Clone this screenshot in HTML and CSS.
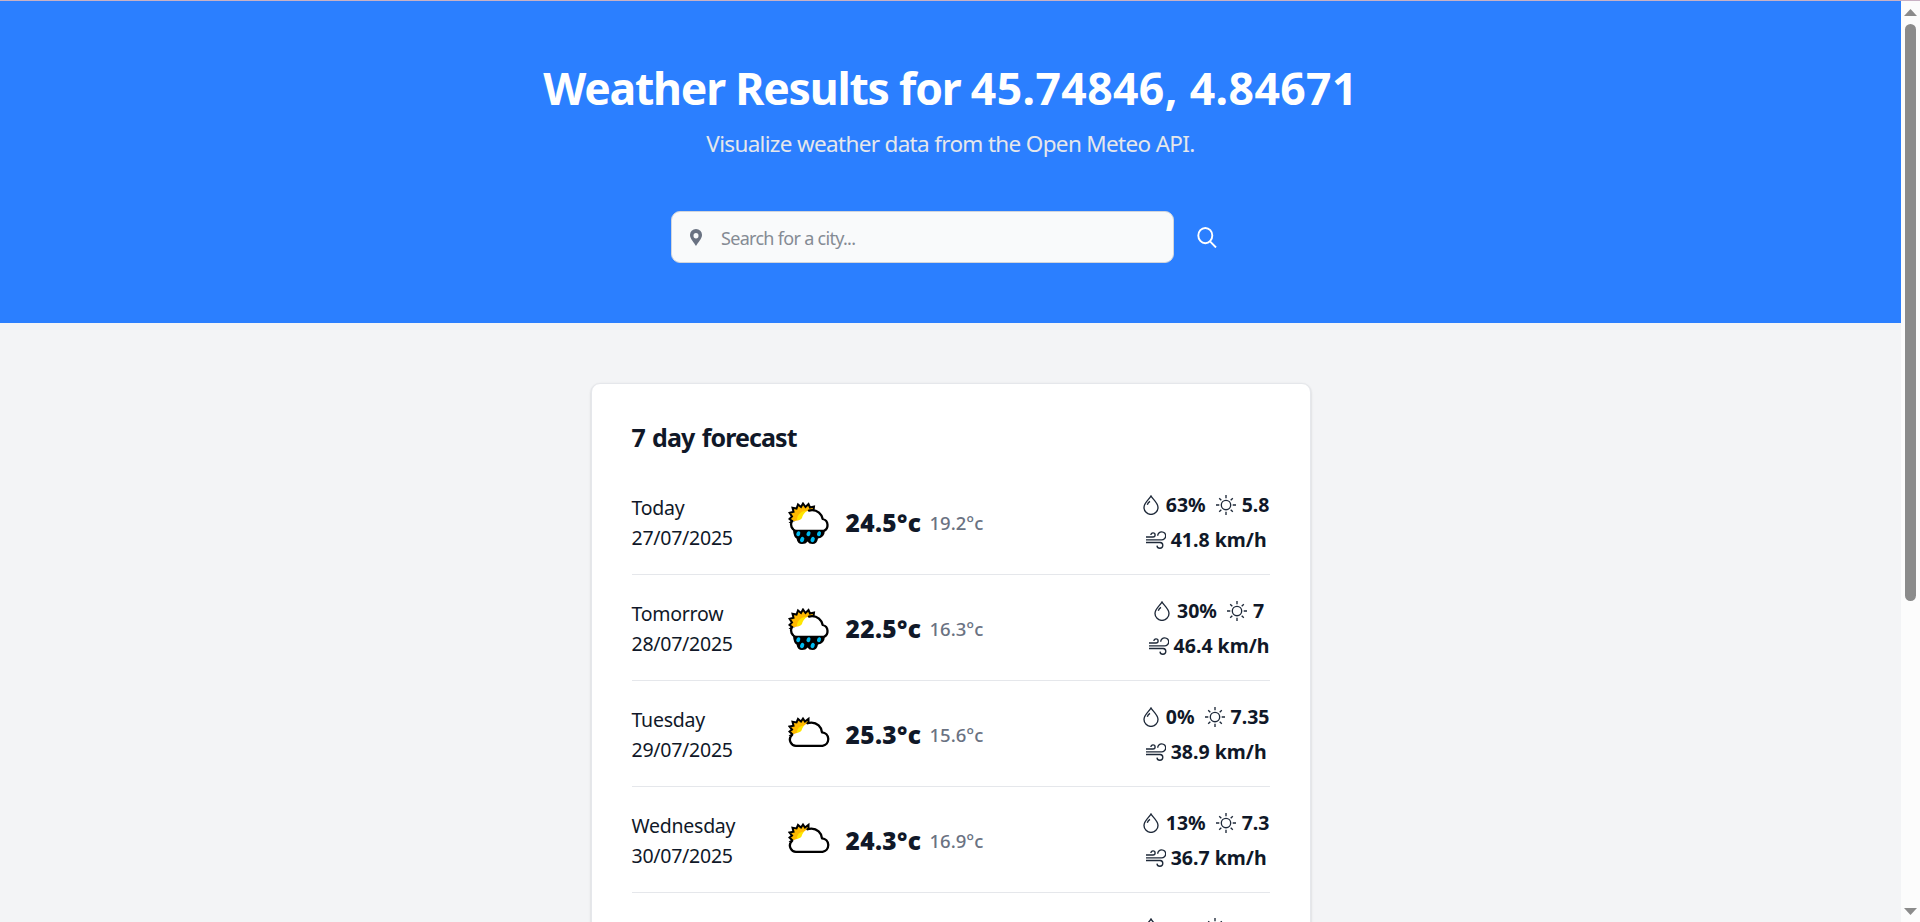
FILE: index.html
```
<!DOCTYPE html>
<html lang="en">
<head>
<meta charset="utf-8">
<title>Weather Results</title>
<link rel="stylesheet" href="styles.css">
</head>
<body>
<svg class="defs" aria-hidden="true">
  <symbol id="drop" viewBox="0 0 16 20"><path d="M8 1C6.500 4 1 7.800 1 12.400A7 7 0 0 0 15 12.400C15 7.800 9.500 4 8 1Z"/><path d="M4.300 9.700Q5 7.500 7 6.300"/></symbol>
  <symbol id="sun" viewBox="0 0 20 20"><circle cx="10" cy="10" r="4.700"/><path d="M10 0V3.300M10 16.700V20M0 10H3.300M16.700 10H20M3.200 3.200L5.300 5.300M14.700 14.700L16.800 16.800M3.200 16.800L5.300 14.700M14.700 5.300L16.800 3.200"/></symbol>
  <symbol id="wind" viewBox="0 0 20 18"><path d="M0 6H7A2.100 2.100 0 1 0 4.900 3.900M0 8.800H15.500A4 4 0 1 0 11.700 4.800M0 11.500H14.200A2.900 2.900 0 1 1 11 14.600"/></symbol>
  <symbol id="cloudsun" viewBox="0 -3 42 42">
    <path class="sun-ray" d="M4 17L1.500 14.500L4 12.500L1.500 9.500L5.500 8.700L4.500 4.800L8.500 5.500L10 2L13 4.500L15 1.500L17 4.500L20.500 1.800L20.500 7L14 18H3Z"/>
    <path class="sun-core" d="M8.500 17A8 8 0 0 1 17.500 8.500V17Z"/>
    <path class="cloud-fill" d="M9.500 28.800A6.300 6.300 0 0 1 4.500 18C7 15.500 11.500 16.500 13.500 13.500C15 8.500 18.500 5.800 23 5.800A10.500 10.500 0 0 1 34 15.300A6.800 6.800 0 0 1 34.500 28.800Z"/>
    <path class="cloud-line" d="M19.500 6.300Q21 5.600 23.500 5.600A10.600 10.600 0 0 1 34 15.300A6.800 6.800 0 0 1 34.500 28.800H9.500A6.300 6.300 0 0 1 4 18"/>
  </symbol>
  <symbol id="rain" viewBox="0 0 42 42">
    <path class="rain-back" d="M5 28H37Q36.500 36 30 36.500Q29 42 24.500 42Q21 42 19.500 39.500Q18 42 14 42Q9.500 42 8.500 36.500Q5.500 35 5 28Z"/>
    <path class="sun-ray" d="M4 19L1.500 17L4 14.500L1.500 10.800L5.500 9.700L4.500 5.700L8.500 6.500L10 2.500L13 5L15 1.500L17.500 5L20.500 2L22 5.500L26 4.500L25.500 8.500L14 20H3Z"/>
    <path class="sun-core" d="M9 18A8.500 8.500 0 0 1 20 9.500V18Z"/>
    <path class="cloud-fill" d="M8 29A6.200 6.200 0 0 1 4 20C7 18.500 12 19 14 16C15.500 10.500 19 8.500 23.500 8.300A10.700 10.700 0 0 1 34 17.500A6.300 6.300 0 0 1 36 29Z"/>
    <path class="cloud-line" d="M21 8.600Q22 8.200 24 8.200A10.700 10.700 0 0 1 34.700 17A6.300 6.300 0 0 1 35.500 29H8A6.800 6.800 0 0 1 4 19"/>
    <g fill="#00bcf2"><ellipse cx="10.300" cy="31.700" rx="1.900" ry="2.600" transform="rotate(22 10.300 31.700)"/><ellipse cx="20.500" cy="31.700" rx="1.900" ry="2.600" transform="rotate(22 20.500 31.700)"/><ellipse cx="31" cy="31.700" rx="1.900" ry="2.600" transform="rotate(22 31 31.700)"/><ellipse cx="14.200" cy="37.500" rx="2" ry="2.700" transform="rotate(22 14.200 37.500)"/><ellipse cx="24.700" cy="37.500" rx="2" ry="2.700" transform="rotate(22 24.700 37.500)"/></g>
  </symbol>
</svg>
<div class="screen">
  <main class="page">
    <header class="hero">
      <h1>Weather Results for <span class="coords">45.74846, 4.84671</span></h1>
      <p>Visualize weather data from the Open Meteo API.</p>
      <form class="search">
        <div class="field">
          <svg class="pin" viewBox="0 0 12 17"><path fill-rule="evenodd" d="M6 0A6 6 0 0 0 0 6.200C0 9.500 4 13.500 6 17C8 13.500 12 9.500 12 6.200A6 6 0 0 0 6 0ZM6 4A2.500 2.700 0 1 1 6 9.400A2.500 2.700 0 1 1 6 4Z"/></svg>
          <span class="placeholder">Search for a city...</span>
        </div>
        <svg class="find" viewBox="0 0 20 21"><ellipse cx="8.300" cy="8.600" rx="7" ry="7.600"/><path d="M13 14.400L19 20.500"/></svg>
      </form>
    </header>
    <section class="card">
      <h2>7 day forecast</h2>
      <ul>
        <li>
          <div class="day"><span>Today</span><br><span>27/07/2025</span></div>
          <svg class="weather"><use href="#rain"/></svg>
          <b class="high">24.5°c</b><span class="low">19.2°c</span>
          <div class="stats"><div><svg class="drop"><use href="#drop"/></svg><b>63%</b><svg class="sun"><use href="#sun"/></svg><b>5.8</b></div><div><svg class="wind"><use href="#wind"/></svg><b>41.8 km/h</b></div></div>
        </li>
        <li>
          <div class="day"><span>Tomorrow</span><br><span>28/07/2025</span></div>
          <svg class="weather"><use href="#rain"/></svg>
          <b class="high">22.5°c</b><span class="low">16.3°c</span>
          <div class="stats"><div><svg class="drop"><use href="#drop"/></svg><b>30%</b><svg class="sun"><use href="#sun"/></svg><b>7</b></div><div><svg class="wind"><use href="#wind"/></svg><b>46.4 km/h</b></div></div>
        </li>
        <li>
          <div class="day"><span>Tuesday</span><br><span>29/07/2025</span></div>
          <svg class="weather"><use href="#cloudsun"/></svg>
          <b class="high">25.3°c</b><span class="low">15.6°c</span>
          <div class="stats"><div><svg class="drop"><use href="#drop"/></svg><b>0%</b><svg class="sun"><use href="#sun"/></svg><b>7.35</b></div><div><svg class="wind"><use href="#wind"/></svg><b>38.9 km/h</b></div></div>
        </li>
        <li>
          <div class="day"><span>Wednesday</span><br><span>30/07/2025</span></div>
          <svg class="weather"><use href="#cloudsun"/></svg>
          <b class="high">24.3°c</b><span class="low">16.9°c</span>
          <div class="stats"><div><svg class="drop"><use href="#drop"/></svg><b>13%</b><svg class="sun"><use href="#sun"/></svg><b>7.3</b></div><div><svg class="wind"><use href="#wind"/></svg><b>36.7 km/h</b></div></div>
        </li>
        <li>
          <div class="stats next"><div><svg class="drop"><use href="#drop"/></svg><svg class="sun"><use href="#sun"/></svg></div></div>
        </li>
      </ul>
    </section>
  </main>
  <aside class="scrollbar">
    <svg viewBox="0 0 13 7"><path d="M6.500 0L13 7H0Z"/></svg>
    <div class="thumb"></div>
    <svg class="down" viewBox="0 0 13 7"><path d="M0 0H13L6.500 7Z"/></svg>
  </aside>
</div>
</body>
</html>
```
FILE: styles.css
```
* { box-sizing: border-box; }
body { margin: 0; overflow: hidden; font-family: "Noto Sans", "Open Sans", sans-serif; color: #101828; }
svg { display: block; flex: none; }
.defs { position: absolute; width: 0; height: 0; }
.screen { display: flex; height: 922px; overflow: hidden; background: #f3f4f6; border-top: 1px solid #c9b1c4; }
.page { flex: 1; display: flex; flex-direction: column; align-items: center; }
h1, h2, p, ul { margin: 0; padding: 0; }

.hero { flex: none; width: 100%; height: 322px; padding-top: 62px; background: #2b7fff; color: #fff; display: flex; flex-direction: column; align-items: center; }
h1 { font-size: 44.500px; line-height: 50px; font-weight: 700; letter-spacing: -1.200px; white-space: nowrap; }
.coords { letter-spacing: 0.400px; }
.hero p { margin-top: 15px; font-size: 22.500px; line-height: 32px; color: #e5e7eb; letter-spacing: -0.670px; white-space: nowrap; }
.search { display: flex; align-items: center; width: 561px; margin: 51px 0 0 2px; }
.field { display: flex; align-items: center; width: 503px; height: 52px; padding-left: 18px; background: #f9fafb; border: 1px solid #d1d5dc; border-radius: 9px; font-size: 18px; color: #858b94; white-space: nowrap; }
.placeholder { letter-spacing: -0.700px; padding-top: 2px; }
.pin { width: 12px; height: 17px; margin-right: 19px; fill: #6a7282; }
.find { width: 20px; height: 21px; margin-left: 23px; fill: none; stroke: #fff; stroke-width: 1.900; }

.card { flex: none; width: 720px; height: 900px; margin-top: 60px; padding: 36px 40px; background: #fff; border: 1px solid #e5e7eb; border-radius: 9px; box-shadow: 0 1px 3px rgba(0,0,0,.1), 0 1px 2px rgba(0,0,0,.08); }
h2 { font-size: 25px; line-height: 34px; font-weight: 700; letter-spacing: -0.900px; word-spacing: 1.600px; white-space: nowrap; }
ul { list-style: none; padding-top: 15px; }
li { display: flex; align-items: center; height: 106px; padding-top: 3px; border-bottom: 1px solid #e5e7eb; }
.day { width: 156px; font-size: 19.500px; line-height: 30px; letter-spacing: -0.250px; white-space: nowrap; }
.weather { width: 42px; height: 42px; margin-right: 16px; }
.sun-ray { fill: #ffb900; stroke: #000; stroke-width: 2; }
.sun-core { fill: #ffe600; }
.cloud-fill { fill: #fff; }
.cloud-line { fill: none; stroke: #000; stroke-width: 2.300; stroke-linecap: round; stroke-linejoin: round; }
.high { width: 84px; font-size: 24.500px; font-weight: 900; line-height: 30px; letter-spacing: 0.350px; white-space: nowrap; }
.low { font-size: 18.500px; font-weight: 500; color: #6a7282; line-height: 30px; white-space: nowrap; }
.stats { margin-left: auto; padding-bottom: 2px; display: flex; flex-direction: column; align-items: center; font-size: 19.500px; white-space: nowrap; }
.stats div { display: flex; align-items: center; height: 35px; }
.stats svg { fill: none; stroke: #1e2939; stroke-width: 1.350; }
.stats .drop { width: 16px; height: 20px; margin-right: 7px; }
.stats .sun { width: 20px; height: 20px; margin: 0 6px 0 10px; }
.stats .wind { width: 20px; height: 18px; margin-right: 5px; }
.next { align-self: flex-start; width: 127px; padding-top: 14px; align-items: flex-start; }
.next .sun { margin-left: 39px; }

.scrollbar { flex: none; width: 19px; height: 921px; padding: 8px 0 7px; background: #fcfcfc; display: flex; flex-direction: column; align-items: center; }
.scrollbar svg { width: 13px; height: 7px; fill: #8b8b8b; }
.thumb { width: 11px; height: 577px; margin-top: 8px; background: #8b8b8b; border-radius: 6px; }
.scrollbar .down { margin-top: auto; }
```
